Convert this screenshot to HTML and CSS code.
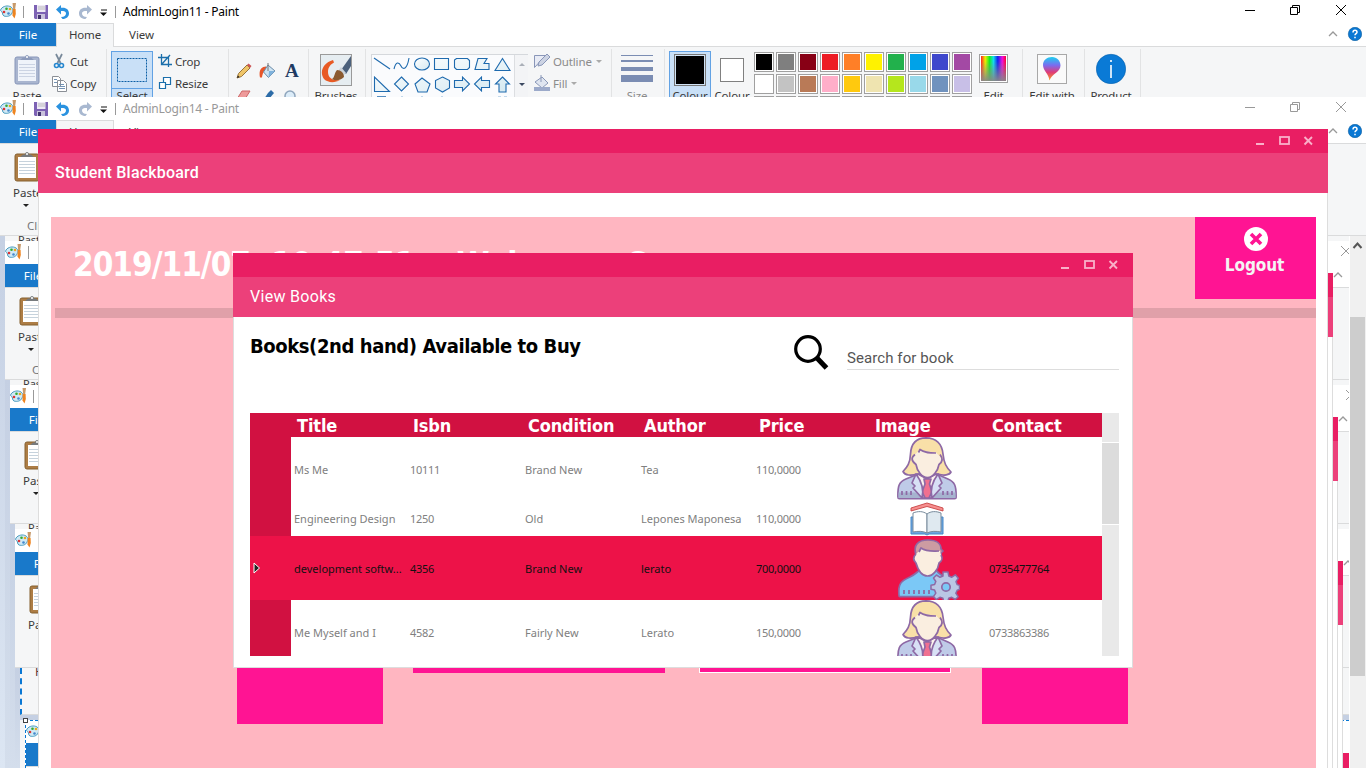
FILE: index.html
```html
<!DOCTYPE html>
<html lang="en">
<head>
<meta charset="utf-8">
<title>Student Blackboard</title>
<link rel="stylesheet" href="styles.css">
</head>
<body>
<svg class="defs" width="0" height="0">
  <linearGradient id="hue" x1="0" x2="1" y1="0" y2="0"><stop offset="0" stop-color="#f22"/><stop offset=".17" stop-color="#ee0"/><stop offset=".34" stop-color="#1e2"/><stop offset=".5" stop-color="#1de"/><stop offset=".67" stop-color="#12e"/><stop offset=".85" stop-color="#e1d"/><stop offset="1" stop-color="#f03"/></linearGradient>
  <linearGradient id="fadegray" x1="0" x2="0" y1="0" y2="1"><stop offset=".2" stop-color="#888" stop-opacity="0"/><stop offset="1" stop-color="#888" stop-opacity=".95"/></linearGradient>
  <linearGradient id="drop" x1="0" x2="0" y1="0" y2="1"><stop offset="0" stop-color="#1bd0f0"/><stop offset=".35" stop-color="#7a6cf0"/><stop offset=".65" stop-color="#e03c78"/><stop offset="1" stop-color="#f5a020"/></linearGradient>
  <linearGradient id="ice" x1="0" x2="1" y1="0" y2="1"><stop offset="0" stop-color="#fff"/><stop offset="1" stop-color="#d5e9f1"/></linearGradient>
  <symbol id="paint" viewBox="0 0 17 16"><path d="M1 6C3 3 8 2 11 4c3 2 2 4 1 6-1 3-5 4-8 3-2-1-1-3-2-4S0 8 1 6z" fill="#cfe9f5" stroke="#4a9cc0"/><circle cx="4" cy="9" r="1.300" fill="#d33"/><circle cx="6.500" cy="5.800" r="1.300" fill="#3a3"/><circle cx="10" cy="6" r="1.300" fill="#e8a820"/><circle cx="8.500" cy="10.500" r="1.300" fill="#48c"/><path d="M12.500 0h3.500l-.8 6h-2z" fill="#c79a6b"/><path d="M12.700 6h2.900l.2 5-1.300 4.500-2-3z" fill="#ee8420"/></symbol>
  <symbol id="save" viewBox="0 0 14 14"><path d="M0 0h14v14H1l-1-1z" fill="#7d62b4"/><path d="M3 0h8.500v7H3z" fill="#eee9f6"/><path d="M4 2h7M4 4h7" stroke="#bbb"/><path d="M3 9h8v5H3z" fill="#c9c2dc"/><path d="M4 10h3v4H4z" fill="#443571"/></symbol>
  <symbol id="undo" viewBox="0 0 14 14"><path d="M0 4.500L5 0v2.800c5-.8 8 1.700 8 5.700 0 3-2.500 5.500-6.500 5.500l-1.500-2c3.500 0 5-1.800 5-3.600C10 6.500 8.500 6 5 6v3.500z"/></symbol>
  <symbol id="more" viewBox="0 0 8 8"><path d="M1 1h6" stroke="#111"/><path d="M0 3.500h7L3.500 7z" fill="#111"/></symbol>
  <symbol id="ctl" viewBox="0 0 104 12"><path d="M0 6.500h10M45.500 3.500h7v7h-7zM47.500 3v-1.500h7v7h-2M91 1l10 10M101 1L91 11" fill="none" stroke="currentColor"/></symbol>
  <symbol id="help" viewBox="0 0 34 14"><path d="M1 9l4-4 4 4" fill="none" stroke="#999" stroke-width="1.300"/><circle cx="27" cy="7" r="6.700" fill="#0a78d4" stroke="#075a9c" stroke-width=".6"/><path d="M25 5.500c0-3 4-2.700 4-.3 0 1.300-2 1.500-2 3M27 9.800v1.500" fill="none" stroke="#fff" stroke-width="1.500"/></symbol>
  <symbol id="clip" viewBox="0 0 26 31"><rect x="1" y="3" width="24" height="27" rx="2" fill="#ad7d45" stroke="#85602f"/><path d="M4 6h18v21H4z" fill="#fff"/><path d="M5 10.500h16M5 13.500h16M5 16.500h16M5 19.500h16M5 22.500h16" stroke="#c6d2dc"/><path d="M6 6l3-2.500h2C11 0 15 0 15 3.500h2L20 6z" fill="#777b7e"/><circle cx="13" cy="3" r="1" fill="#fff"/></symbol>
  <symbol id="clipoff" viewBox="0 0 26 31"><rect x="1" y="3" width="24" height="27" rx="2" fill="#a9b5cf" stroke="#8796b9"/><path d="M4 6h18v21H4z" fill="#eff3fa"/><path d="M5 10.500h16M5 13.500h16M5 16.500h16M5 19.500h16M5 22.500h16" stroke="#cbd3e3"/><path d="M6 6l3-2.500h2C11 0 15 0 15 3.500h2L20 6z" fill="#8d9bbb"/><circle cx="13" cy="3" r="1" fill="#fff"/></symbol>
  <symbol id="pctl" viewBox="0 0 58 10"><path d="M0 8h8" stroke="#f9b0c9" stroke-width="2"/><rect x="24" y="1" width="9" height="7" fill="none" stroke="#f9b0c9" stroke-width="1.800"/><path d="M48.500 1l7.500 7.500M56 1l-7.500 7.500" stroke="#f9b0c9" stroke-width="1.900" fill="none"/></symbol>
  <symbol id="woman" viewBox="0 0 60 64">
    <g stroke="#8e69a5" stroke-width="1.700" stroke-linejoin="round">
    <path d="M29 .9C18 1 14 8 13.500 17c-.4 9-3 13-7.500 17.500 2 4 8 4.500 14 2.500h21c6 2 11.500 1 13-2-5-5-7-9-8-18C45 7 39 1 29 .9z" fill="#f9e0a8"/>
    <path d="M.9 58c0-9 1-13 8-16l10-4h23l9 4c7 3 8.200 7 8.200 16v2.500q0 1.200-1.500 1.200H2.400Q.9 61.700.9 60z" fill="#bfcbe8"/>
    <path d="M1.500 55.500h57v5.500h-57z" fill="#a6b3cf" stroke="none"/>
    <path d="M21 37l9 5 9-5 4 8-9 16H26L16 45z" fill="#fdf3ee"/>
    <path d="M27 42h7l-1.500 5 2.500 8-3 6h-4l-3-6 3-8z" fill="#f07090"/>
    <path d="M19 37l-4 9 3 3-2 2 9 10c2-8 0-16-6-24zM41 37l4 9-3 3 2 2-9 10c-2-8 0-16 6-24z" fill="#d8e0f5"/>
    <path d="M18 17.500l4-4 17 2 3 3c4 4 3 7 0 9-1 6-6 13-11.500 13S20 34 19 27.500c-5-4-4-7-1-10z" fill="#faeee0" stroke="none"/>
    <path d="M18 17.500c-4 3-4 6 1 10 1 6.500 6 13 11.500 13s10.500-7 11.500-13c4-3 4-6 1-10M21.500 15.500l1.500-3c5 3.500 10 3.500 16 3.500" fill="none"/></g>
    <path d="M5 54v4M9.500 54v4M14 54v4M46 54v4M50.500 54v4M55 54v4" stroke="#8e69a5" stroke-width="1.700"/>
  </symbol>
</svg>

<main class="desktop">
  <div class="workspace"></div>

  <!-- nested captures, each one step down and right -->
  <section class="snap s1">
    <div class="cut">Paste</div>
    <div class="ntitle"><svg width="17" height="16"><use href="#paint"/></svg><i></i><svg class="nctl" width="104" height="12"><use href="#ctl"/></svg></div>
    <div class="ntabs"><b>File</b><svg width="34" height="14"><use href="#help"/></svg></div>
    <div class="nribbon"><svg width="26" height="31"><use href="#clip"/></svg><span>Paste</span><em></em><u>Clipboard</u></div>
    <div class="ncanvas"></div>
  </section>
  <section class="snap s2">
    <div class="cut">Paste</div>
    <div class="ntitle"><svg width="17" height="16"><use href="#paint"/></svg><i></i><svg class="nctl" width="104" height="12"><use href="#ctl"/></svg></div>
    <div class="ntabs"><b>File</b><svg width="34" height="14"><use href="#help"/></svg></div>
    <div class="nribbon"><svg width="26" height="31"><use href="#clip"/></svg><span>Paste</span><em></em></div>
    <div class="ncanvas"></div>
  </section>
  <section class="snap s3">
    <div class="cut">Paste</div>
    <div class="ntitle"><svg width="17" height="16"><use href="#paint"/></svg></div>
    <div class="ntabs"><b>File</b><svg width="34" height="14"><use href="#help"/></svg></div>
    <div class="nribbon"><svg width="26" height="31"><use href="#clip"/></svg><span>Paste</span></div>
    <div class="ncanvas"></div>
  </section>
  <section class="snap s4">
    <div class="lastribbon">Paste</div>
    <div class="lastgap"></div>
    <div class="lastwin">
      <div class="ntitle"><svg width="17" height="16"><use href="#paint"/></svg></div>
      <div class="ntabs"><b></b></div>
    </div>
    <span class="handle"></span>
  </section>
  <div class="edge e4"></div><div class="edge e3"></div><div class="edge e2"></div><div class="edge e1"></div>

  <div class="vscroll"><svg width="16" height="81"><path d="M3.500 12l4-4.500 4 4.500" fill="none" stroke="#555" stroke-width="2"/></svg><span></span></div>

  <!-- background Paint window -->
  <section class="paint back">
    <header class="title"><svg width="17" height="16"><use href="#paint"/></svg><i></i><svg class="sv" width="14" height="14"><use href="#save"/></svg><svg class="un" width="14" height="14"><use href="#undo"/></svg><svg class="re" width="14" height="14"><use href="#undo"/></svg><svg class="mo" width="8" height="8"><use href="#more"/></svg><i class="i2"></i><span>AdminLogin14 - Paint</span><svg class="ctl" width="104" height="12"><use href="#ctl"/></svg></header>
    <nav class="tabs"><b>File</b><span class="home">Home</span><span class="view">View</span><svg width="34" height="14"><use href="#help"/></svg></nav>
    <div class="nribbon main"><svg width="26" height="31"><use href="#clip"/></svg><span>Paste</span><em></em><u>Clipboard</u></div>
  </section>

  <!-- front Paint window -->
  <section class="paint front">
    <header class="title"><svg width="17" height="16"><use href="#paint"/></svg><i></i><svg class="sv" width="14" height="14"><use href="#save"/></svg><svg class="un" width="14" height="14"><use href="#undo"/></svg><svg class="re" width="14" height="14"><use href="#undo"/></svg><svg class="mo" width="8" height="8"><use href="#more"/></svg><i class="i2"></i><span>AdminLogin11 - Paint</span><svg class="ctl" width="104" height="12"><use href="#ctl"/></svg></header>
    <nav class="tabs"><b>File</b><span class="home">Home</span><span class="view">View</span><svg width="34" height="14"><use href="#help"/></svg></nav>
    <div class="ribbon">
      <div class="grp g1">
        <div class="big paste"><svg width="26" height="31"><use href="#clipoff"/></svg><span>Paste</span></div>
        <div class="stack">
          <div><svg width="17" height="16" viewBox="0 0 17 16"><path d="M5 1l4.500 9M11 1L6.500 10" stroke="#78899a" stroke-width="1.700"/><circle cx="5.500" cy="12.500" r="2" fill="none" stroke="#2687cf" stroke-width="1.600"/><circle cx="10.500" cy="12.500" r="2" fill="none" stroke="#2687cf" stroke-width="1.600"/></svg><span>Cut</span></div>
          <div><svg width="17" height="17" viewBox="0 0 17 17"><path d="M1.500 1.500h6l2 2v8h-8zM6.500 5.500h6l3 3v8h-9z" fill="#fff" stroke="#8a8f96"/><path d="M3 4.500h3M3 7.500h3M8 9.500h5M8 11.500h6M8 13.500h6" stroke="#7393b5"/></svg><span>Copy</span></div>
        </div>
      </div>
      <div class="grp g2">
        <div class="select"><svg width="40" height="36"><rect x="5.500" y="6.500" width="29" height="23" fill="none" stroke="#0b5fa5" stroke-dasharray="2 1"/></svg><span>Select</span></div>
        <div class="stack">
          <div><svg width="16" height="14" viewBox="0 0 16 14"><path d="M3.500 0v10.500H14M0 3.500h10.500V13M4 10L12 1" fill="none" stroke="#1b6fab" stroke-width="1.300"/></svg><span>Crop</span></div>
          <div><svg width="16" height="14" viewBox="0 0 16 14"><path d="M5.500 1.500h7v7h-7z" fill="#fff" stroke="#1b6fab" stroke-width="1.200"/><path d="M1.500 6.500h6v6h-6z" fill="#fff" stroke="#1b6fab" stroke-width="1.200"/></svg><span>Resize</span></div>
        </div>
      </div>
      <div class="grp g3">
        <svg width="16" height="16" viewBox="0 0 16 16"><path d="M1 15l1.500-4.500L11 2l3 3-8.500 8.500z" fill="#efc568" stroke="#98743d"/><path d="M11 2l1.500-1.500L15.500 3 14 5z" fill="#c55"/><path d="M1 15l1-2.500 1.500 1.500z" fill="#222"/></svg>
        <svg width="17" height="16" viewBox="0 0 17 16"><path d="M1 14.500C-.5 8 2 3.500 7 3.500l1 3c-3 .5-4.500 4-5 8z" fill="#e8562a"/><path d="M9 2l7 6-6.500 6.500L4.500 9z" fill="#cfe4f3" stroke="#6a8ba8"/><path d="M10 8l6 0-6.500 6.500z" fill="#7fb2dc"/><path d="M9 8V0" stroke="#777"/></svg>
        <span class="bigA">A</span>
        <svg width="15" height="9" viewBox="0 0 15 9"><path d="M6 1h8l-5 8H1z" fill="#ee9a9a" stroke="#c66"/></svg>
        <svg width="15" height="9" viewBox="0 0 15 9"><path d="M12 0l3 3-5 6H5l4-6z" fill="#2c6ca8"/></svg>
        <svg width="15" height="9" viewBox="0 0 15 9"><circle cx="7" cy="6" r="5" fill="#dcecf8" stroke="#8fa6bd" stroke-width="1.500"/></svg>
      </div>
      <div class="grp g4"><div class="big"><svg width="32" height="32" viewBox="0 0 32 32"><rect x=".5" y=".5" width="31" height="31" fill="#e6edf1" stroke="#9a9a9a"/><path d="M13 6C3 9-1 18 4 25c4 4 11 4 16 1-7 1-12-2-12-8 0-5 3-8 6-9.500z" fill="#e85a24"/><path d="M31 2v10L26 20l-5-4z" fill="#4c617c"/><path d="M21 13l5 6-3 3-5-5z" fill="#ccd3da"/><path d="M17 16c4 0 7 3 7 7-4 4-9 4-12 2 3-2 2-6 5-9z" fill="#8a5a30"/></svg><span>Brushes</span></div></div>
      <div class="grp g5">
        <div class="shapes"><svg width="142" height="43" viewBox="0 0 142 43"><g fill="url(#ice)" stroke="#1e6aae" stroke-width="1.100"><path d="M2 3l16 11"/><path d="M22 14c2-8 5-7 7-3s6 4 8-8" fill="none"/><ellipse cx="50" cy="9" rx="7.500" ry="6"/><path d="M62.500 3.500h14v11h-14zM82.500 5l2-1.500h11l2 2v7l-2 2h-11l-2-2zM106 3.500h9l-3 5h5v6h-14zM130.500 3.500l7.500 12h-15zM2.500 22v14.500h15zM29.500 22l7 7-7 7-7-7zM50 23l8 6-3 8h-9l-3-8zM70.500 22l7 3.500v7.500l-7 4-7-4v-7.500zM82.500 25.500h8V22l7 7-7 7v-3.500h-8zM117.500 25.500h-8V22l-7 7 7 7v-3.500h8zM130.500 22l7 7h-3.500v8h-7v-8h-3.500z"/></g><path d="M5 42h9" stroke="#1e6aae" stroke-width="1.500"/><path d="M29 42h2M49 42h2M69 42h2M126 42h3M132 42h3" stroke="#8ab4d8"/></svg>
          <svg class="arrows" width="14" height="43"><path d="M4 11l3-3 3 3z" fill="#aaafb8"/><path d="M4 28h6l-3 3z" fill="#3b4860"/></svg></div>
        <div class="stack off">
          <div><svg width="18" height="16" viewBox="0 0 18 16"><path d="M1.500 2.500h11l-11 12z" fill="#e8ebf5" stroke="#8996b8"/><path d="M5 13l1-4 8-8 3 3-8 8z" fill="#ccd3e3" stroke="#8996b8"/></svg><span>Outline</span><s></s></div>
          <div><svg width="18" height="16" viewBox="0 0 18 16"><path d="M2 7l7-5 6 6-6 5z" fill="#dfe5f0" stroke="#8a98b8"/><path d="M8 0v7" stroke="#8a98b8"/><path d="M1 12h16v4H1z" fill="#9caaca"/></svg><span>Fill</span><s></s></div>
        </div>
      </div>
      <div class="grp g6"><div class="big"><svg width="32" height="31"><path d="M0 1.500h32" stroke="#7b8db3"/><path d="M0 7h32" stroke="#7b8db3" stroke-width="2"/><path d="M0 15h32" stroke="#7b8db3" stroke-width="4"/><path d="M0 24.500h32" stroke="#7b8db3" stroke-width="7"/></svg><span class="dim">Size</span></div></div>
      <div class="grp g7">
        <div class="col1"><i></i><span>Colour</span></div>
        <div class="col2"><i></i><span>Colour</span></div>
        <div class="pal"><i class="c01"></i><i class="c02"></i><i class="c03"></i><i class="c04"></i><i class="c05"></i><i class="c06"></i><i class="c07"></i><i class="c08"></i><i class="c09"></i><i class="c10"></i><i></i><i class="c12"></i><i class="c13"></i><i class="c14"></i><i class="c15"></i><i class="c16"></i><i class="c17"></i><i class="c18"></i><i class="c19"></i><i class="c20"></i><i></i><i></i><i></i><i></i><i></i><i></i><i></i><i></i><i></i><i></i></div>
        <div class="big edit"><svg width="29" height="30"><rect x=".5" y="1.500" width="28" height="28" fill="#fff" stroke="#a0a0a0"/><path d="M2 3h25v25H2z" fill="url(#hue)"/><path d="M2 3h25v25H2z" fill="url(#fadegray)"/></svg><span>Edit</span></div>
      </div>
      <div class="grp g8"><div class="big"><svg width="30" height="31"><rect x=".5" y="1.500" width="29" height="29" fill="#fafafa" stroke="#a8a8a8"/><path d="M15 4c5 0 8.500 4 8.500 8.500 0 7-9 8-11 15C12 21 6 18 6 12c0-5 4-8 9-8z" fill="url(#drop)"/></svg><span>Edit with</span></div></div>
      <div class="grp g9"><div class="big"><svg width="30" height="31"><circle cx="15" cy="16" r="14.700" fill="#0a7ad6" stroke="#0862ad" stroke-width=".6"/><path d="M15 12v13M15 7v2" stroke="#fff" stroke-width="1.600"/></svg><span>Product</span></div></div>
    </div>
  </section>

  <!-- Student Blackboard window -->
  <section class="win board">
    <div class="bar"><svg width="58" height="10"><use href="#pctl"/></svg></div>
    <h1>Student Blackboard</h1>
    <div class="pane">
      <div class="top"><p class="clock">2019/11/0<span>7 10:47:51 &nbsp;Welcome C</span></p>
        <div class="logout"><svg width="26" height="26"><circle cx="13" cy="13" r="12" fill="#fff"/><path d="M8 8l10 10M18 8L8 18" stroke="#ff1493" stroke-width="3.600"/></svg><span>Logout</span></div></div>
      <div class="rule"></div>
      <div class="tiles"><i class="t1"></i><i class="t2"></i><i class="t3"></i><i class="t4"></i></div>
    </div>
  </section>

  <!-- View Books window -->
  <section class="win books">
    <div class="bar"><svg width="58" height="10"><use href="#pctl"/></svg></div>
    <h1>View Books</h1>
    <div class="content">
      <div class="head">
        <h2>Books(2nd hand) Available to Buy</h2>
        <svg width="36" height="37" viewBox="0 0 36 37"><circle cx="14" cy="15" r="12.300" fill="none" stroke="#000" stroke-width="3.200"/><path d="M22.500 23.500L32.500 34" stroke="#000" stroke-width="5"/></svg>
        <div class="search">Search for book</div>
      </div>
      <div class="tablewrap">
        <div class="table">
          <div class="row hd"><i></i><span>Title</span><span>Isbn</span><span>Condition</span><span>Author</span><span>Price</span><span>Image</span><span>Contact</span></div>
          <div class="row r1"><i></i><span>Ms Me</span><span class="num">10111</span><span>Brand New</span><span>Tea</span><span class="num">110,0000</span><span class="img"><svg width="60" height="64"><use href="#woman"/></svg></span><span></span></div>
          <div class="row r2"><i></i><span>Engineering Design</span><span class="num">1250</span><span>Old</span><span>Lepones Maponesa</span><span class="num">110,0000</span><span class="img"><svg width="34" height="35" viewBox="0 0 34 35"><path d="M1 6l16-5 16 5v3L17 4.500 1 9z" fill="#f78f8f" stroke="#c74343" stroke-width=".9"/><path d="M1 15h32v17H19l-2 1-2-1H1z" fill="#6ea6e0" stroke="#4788c7"/><path d="M3 11c5-2 10-2 14 1v19c-4-2-9-2-14-1z" fill="#fff" stroke="#788b9c"/><path d="M31 11c-5-2-10-2-14 1v19c4-2 9-2 14-1z" fill="#dfe9f0" stroke="#788b9c"/></svg></span><span></span></div>
          <div class="row sel"><i><svg width="8" height="12"><path d="M1 1l5.500 5L1 11z" fill="#222" stroke="#fff"/></svg></i><span>development softw...</span><span class="num">4356</span><span>Brand New</span><span>lerato</span><span class="num">700,0000</span><span class="img"><svg width="64" height="64" viewBox="0 0 64 64"><g stroke="#8e69a5" stroke-width="1.700" stroke-linejoin="round"><path d="M2.900 59c-1-11 2-14 11-18 6-3 7-5 9-6h18c3 5 12 7 15 11l1 14.700H4q-1.100 0-1.100-1.700z" fill="#7bc8f6"/><path d="M20 19c-3-10 2-15 12-15 9 0 13 4 13 9l2 2-2 2v4z" fill="#cc9ba2"/><path d="M22 16l4-4c6 4 11 3 18 3l1 4c2 4 1 6-2 8-1 7-6 13-11.500 13S22 34 20 27c-4-4-2-7 2-11z" fill="#faeee0" stroke="none"/><path d="M20 18c-3 3-3 6 0 9 2 7 6 13 11.500 13S42 34 43 27c3-2 4-5 2-8M23 16l2-4c6 4 11 3 18 3" fill="none"/><path d="M47 36h5l.8 4 3 1.200 3.500-2.400 3 3.400-2.300 3.400 1.200 3 2.300.8v4l-2.300.8-1.400 3 2.300 3.500-2.900 2.800-3.500-2.200-3 1-.9 3.500h-4l-.9-3.500-3-1-3.600 2.200-2.800-2.900 2.300-3.500-1.200-3-3.600-.8v-4l3.600-.8 1.200-3-2.300-3.500 3-3 3.500 2.300 3-1.200z" fill="#bac7e5" stroke-width="1.500"/><circle cx="50" cy="51" r="4.200" fill="#7bc8f6"/></g><path d="M8 54v4M13 54v4M18 54v4M23 54v4M28 54v4M33 54v4" stroke="#8e69a5" stroke-width="1.800"/></svg></span><span class="num">0735477764</span></div>
          <div class="row r1"><i></i><span>Me Myself and I</span><span class="num">4582</span><span>Fairly New</span><span>Lerato</span><span class="num">150,0000</span><span class="img"><svg width="60" height="64"><use href="#woman"/></svg></span><span class="num">0733863386</span></div>
        </div>
        <div class="tscroll"><i></i><b></b><i class="rest"></i></div>
      </div>
    </div>
  </section>
</main>
</body>
</html>
```

FILE: styles.css
```css
* { box-sizing: border-box; }
body { margin: 0; font: 12px "Noto Sans", "Open Sans", sans-serif; }
svg { display: block; flex: none; }
.defs { position: absolute; }
i, em { font-style: normal; }
b { font-weight: 400; }
u, s { text-decoration: none; }
.desktop { position: relative; width: 1366px; height: 768px; overflow: hidden; background: #f5f6f7; }
.workspace { position: absolute; top: 236px; left: 0; right: 0; bottom: 0; background: linear-gradient(#c5d0e3, #dce6f3); }

/* nested captures */
.snap { position: absolute; display: flex; flex-direction: column; overflow: hidden; background: #f5f6f7; color: #3b3b3b; }
.s1 { left: 5px; top: 236px; width: 1344px; height: 532px; }
.s2 { left: 10px; top: 380px; width: 1339px; height: 388px; }
.s3 { left: 15px; top: 524px; width: 1334px; height: 244px; }
.s4 { left: 20px; top: 668px; width: 1329px; height: 100px; }
.cut { height: 5px; flex: none; padding-left: 13px; overflow: hidden; line-height: 8px; font-size: 11px; }
.ntitle { height: 23px; flex: none; display: flex; align-items: center; background: #fff; color: #999; }
.ntitle > svg:first-child { margin-top: -2px; }
.ntitle i { width: 1px; height: 13px; margin-left: 6px; background: #999; }
.nctl { margin-left: auto; margin-top: -3px; }
.s1 .nctl { margin-right: -5px; }
.s2 .nctl { margin-right: -10px; }
.ntabs { height: 24px; flex: none; display: flex; background: #fff; border-bottom: 1px solid #dadbdc; }
.ntabs b { width: 56px; height: 23px; background: #1979ca; color: #fff; text-align: center; line-height: 23px; font-size: 11.500px; }
.ntabs svg { margin: 4px -19px 0 auto; }
.s1 .ntabs svg { margin-right: -18px; }
.s2 .ntabs svg { margin-right: -23px; }
.s3 .ntabs svg { margin-right: -28px; }
.nribbon { height: 92px; flex: none; padding: 7px 0 0 14px; border-bottom: 1px solid #dadbdc; background: #f5f6f7; overflow: hidden; }
.nribbon span { display: block; margin: 3px 0 0 -1px; line-height: 16px; font-size: 11.500px; }
.nribbon em { display: block; width: 0; margin: 3px 0 0 9px; border: 3px solid transparent; border-top-color: #222; border-bottom: 0; }
.nribbon u { display: block; margin: 11px 0 0 13px; line-height: 16px; font-size: 11.500px; color: #777; }
.ncanvas { flex: 1; background: linear-gradient(#c5d0e3, #d4deec); }
.lastribbon { height: 47px; flex: none; padding-left: 13px; line-height: 8px; border-left: 2px dashed #0a78d4; border-bottom: 1px solid #dadbdc; color: #603838; }
.lastgap { height: 5px; flex: none; background: #c5d0e3; }
.lastwin { flex: 1; margin-left: 5px; border-top: 1px dashed #0a78d4; border-left: 1px dashed #0a78d4; background: #fff; }
.lastwin .ntitle { height: 22px; }
.handle { position: absolute; left: 3px; top: 50px; width: 5px; height: 5px; border: 1px solid #444; background: #fff; }
.edge { position: absolute; width: 20px; bottom: 0; border-right: 1px solid #ddd; background: #fff; }
.edge::before { content: ""; position: absolute; left: 0; top: 0; width: 20px; height: 64px; background: linear-gradient(#e91e63 24px, #ec407a 24px); }
.e1 { left: 1313px; top: 273px; }
.e2 { left: 1318px; top: 417px; }
.e3 { left: 1323px; top: 561px; }
.e4 { left: 1329px; top: 753px; }
.vscroll { position: absolute; left: 1349px; top: 236px; width: 17px; height: 532px; background: #f0f0f0; border-left: 1px solid #fff; }
.vscroll span { display: block; width: 15px; height: 359px; background: #cdcdcd; }

/* Paint windows */
.paint { position: absolute; left: 0; width: 1366px; background: #fff; overflow: hidden; color: #3b3b3b; }
.front { top: 0; height: 97px; }
.back { top: 97px; height: 139px; }
.title { height: 23px; display: flex; align-items: center; color: #999; }
.front .title { color: #000; }
.title > svg:first-child { margin-top: -2px; }
.title > i { width: 1px; height: 12px; margin-left: 6px; background: #999; }
.title .sv { margin-left: 10px; }
.title .un { margin-left: 8px; fill: #2a92e0; }
.title .re { margin-left: 8px; fill: #a8b8d0; transform: scaleX(-1); }
.title .mo { margin-left: 8px; margin-top: 2px; }
.title .i2 { margin-left: 7px; }
.title span { margin-left: 7px; font-size: 12px; letter-spacing: -.25px; }
.title .ctl { margin-left: auto; margin-right: 17px; margin-top: -3px; }
.tabs { height: 24px; display: flex; border-bottom: 1px solid #dadbdc; line-height: 23px; font-size: 11.500px; }
.tabs b { width: 56px; background: #1979ca; color: #fff; text-align: center; }
.tabs .home { width: 58px; height: 24px; text-align: center; background: #f5f6f7; border: 1px solid #dadbdc; border-bottom: 0; line-height: 21px; letter-spacing: -.2px; }
.tabs .view { margin-left: 15px; }
.tabs svg { margin: 4px 4px 0 auto; }
.ribbon { display: flex; height: 50px; background: #f5f6f7; font-size: 11.500px; letter-spacing: -.15px; }
.grp { display: flex; position: relative; height: 48px; flex: none; padding-top: 5px; border-right: 1px solid #e2e3e4; margin-top: 2px; }
.big { display: flex; flex-direction: column; align-items: center; white-space: nowrap; height: 49px; }
.big span { margin-top: auto; }
.big svg { margin-top: -1px; }
.g4 .big svg, .g1 .big svg, .g6 .big svg { margin-top: 0; }
.big span, .select span, .col1 span, .col2 span { line-height: 14px; }
.stack { display: flex; flex-direction: column; gap: 6px; margin-top: -1px; }
.stack > div { display: flex; height: 16px; flex: none; align-items: center; white-space: nowrap; }
.g1 { width: 107px; }
.paste { width: 26px; margin-left: 14px; }
.g1 .stack { margin-left: 11px; }
.g1 .stack span { margin-left: 2px; }
.g2 { width: 122px; }
.select { width: 42px; height: 60px; margin: -3px 0 0 4px; border: 1px solid #62a2e4; background: #c9e0f7; display: flex; flex-direction: column; align-items: center; }
.select svg { border-bottom: 1px solid #62a2e4; height: 37px; }
.select span { margin-top: 0; }
.g2 .stack { margin-left: 5px; }
.g2 .stack span { margin-left: 1px; }
.g3 { width: 80px; display: grid; grid-template-columns: 23px 24px 23px; grid-auto-rows: 27px; padding: 14px 0 0 7px; }
.bigA { font: bold 19px/16px "Liberation Serif", serif; color: #1f3b63; padding-left: 2px; }
.g4 { width: 57px; padding-right: 2px; justify-content: center; }
.g5 { width: 246px; padding-left: 5px; }
.shapes { display: flex; width: 157px; height: 60px; border: 1px solid #d5d8dc; background: #fafbfd; }
.arrows { border-left: 1px solid #dcdee1; background: #f3f4f6; height: 60px; }
.g5 .stack { margin-left: 5px; }
.g5 .stack span { margin-left: 2px; }
.off { color: #8b8b8b; }
.off s { border: 3px solid transparent; border-top-color: #aaa; border-bottom: 0; margin-left: 4px; }
.g6 { width: 53px; padding-right: 2px; justify-content: center; }
.dim { color: #8b8b8b; }
.g7 { width: 358px; padding-left: 4px; }
.col1, .col2 { display: flex; flex-direction: column; align-items: center; }
.col1 { width: 42px; height: 60px; margin-top: -3px; border: 1px solid #62a2e4; background: #c9e0f7; padding-top: 2px; }
.col1 i { flex: none; width: 32px; height: 32px; border: 1px solid #777; background: #000; box-shadow: inset 0 0 0 1px #cfe2f5; }
.col1 span { margin-top: 3px; }
.col2 { width: 36px; height: 60px; margin-left: 3px; padding-top: 4px; }
.col2 i { flex: none; width: 24px; height: 24px; border: 1px solid #808080; background: #fff; }
.col2 span { margin-top: 7px; }
.pal { display: grid; grid-template-columns: repeat(10, 20px); grid-auto-rows: 20px; gap: 2px; margin: -2px 0 0 4px; }
.pal i { border: 1px solid #a0a0a0; box-shadow: inset 0 0 0 1px #fff; background: #fff; }
.pal .c01 { background: #000; } .pal .c02 { background: #7f7f7f; } .pal .c03 { background: #880015; } .pal .c04 { background: #ed1c24; } .pal .c05 { background: #ff7f27; }
.pal .c06 { background: #fff200; } .pal .c07 { background: #22b14c; } .pal .c08 { background: #00a2e8; } .pal .c09 { background: #3f48cc; } .pal .c10 { background: #a349a4; }
.pal .c12 { background: #c3c3c3; } .pal .c13 { background: #b97a57; } .pal .c14 { background: #ffaec9; } .pal .c15 { background: #ffc90e; } .pal .c16 { background: #efe4b0; }
.pal .c17 { background: #b5e61d; } .pal .c18 { background: #99d9ea; } .pal .c19 { background: #7092be; } .pal .c20 { background: #c8bfe7; }
.edit { margin-left: 7px; }
.g8 { width: 62px; padding-right: 3px; justify-content: center; }
.g9 { width: 56px; padding-right: 3px; justify-content: center; }

/* pink windows */
.win { position: absolute; background: #fff; border: 1px solid #ddd; border-top: 0; }
.bar { height: 24px; margin: 0 -1px; padding: 7px 14px 0 0; background: #e91e63; }
.bar svg { margin-left: auto; }
.win h1 { height: 40px; margin: 0 -1px; padding-left: 17px; background: #ec407a; color: #fff; font: 500 16px/39px Roboto, sans-serif; letter-spacing: .2px; }
.win.books h1 { font-weight: 400; letter-spacing: .3px; }
.board { left: 38px; top: 129px; width: 1290px; height: 660px; }
.pane { margin: 24px 11px 0 12px; height: 560px; background: #ffb6c1; }
.top { height: 91px; display: flex; justify-content: space-between; overflow: hidden; }
.clock { margin: 25px 0 0 22px; color: #fff; font: bold 33px/46px "DejaVu Sans Condensed", "DejaVu Sans", sans-serif; font-stretch: condensed; letter-spacing: -1px; white-space: nowrap; }
.clock span { letter-spacing: -.5px; word-spacing: 11px; }
.logout { width: 121px; height: 82px; background: #ff1493; padding-top: 9px; display: flex; flex-direction: column; align-items: center; color: #f4f4f4; font: bold 17px/26px "DejaVu Sans Condensed", "DejaVu Sans", sans-serif; font-stretch: condensed; letter-spacing: -.1px; }
.logout span { padding-right: 2px; }
.rule { height: 10px; margin-left: 4px; background: #e0a0a9; }
.tiles { display: flex; align-items: flex-start; padding-left: 186px; }
.tiles i { background: #ff1493; }
.t1, .t4 { width: 146px; height: 406px; }
.t2 { width: 252px; height: 355px; margin-left: 30px; }
.t3 { width: 252px; height: 355px; margin-left: 34px; border: 1px solid #fff; border-top: 0; }
.t4 { margin-left: 31px; }
.books { left: 233px; top: 253px; width: 900px; height: 415px; }
.content { padding: 0 13px 0 16px; }
.head { display: flex; height: 96px; }
.head h2 { width: 544px; margin: 16px 0 0; font: bold 20px/26px "DejaVu Sans Condensed", "DejaVu Sans", sans-serif; font-stretch: condensed; letter-spacing: -.4px; white-space: nowrap; }
.head svg { margin-top: 17px; }
.search { width: 272px; height: 53px; margin-left: 17px; padding-top: 31px; border-bottom: 1px solid #ddd; color: #555; font: 15px/21px Roboto, sans-serif; letter-spacing: .08px; }
.tablewrap { display: flex; height: 243px; overflow: hidden; }
.table { width: 852px; }
.row { display: grid; grid-template-columns: 41px 116px 115px 116px 115px 116px 117px 116px; align-items: center; color: #808080; font-size: 11px; }
.row > i { background: #d11141; align-self: stretch; display: flex; align-items: center; padding-left: 3px; }
.row span { padding-left: 3px; white-space: nowrap; }
.row .num { letter-spacing: -.28px; }
.row .img { display: flex; justify-content: center; padding: 0; align-self: stretch; align-items: center; }
.row.r2 .img { padding-right: 1px; }
.row.r1 .img { padding-right: 1px; }
.hd { height: 24px; background: #d11141; color: #fff; font: bold 18px/24px "DejaVu Sans Condensed", "DejaVu Sans", sans-serif; font-stretch: condensed; letter-spacing: -.15px; }
.hd span { padding: 1px 0 0 6px; }
.r1 { height: 64px; }
.r2 { height: 35px; }
.r2 > span { margin-top: -1px; }
.r2 > .img { margin-top: 1px; margin-bottom: -1px; }
.sel { height: 64px; background: #ed1248; color: #111; }
.sel > i { background: none; }
.tscroll { width: 17px; display: flex; flex-direction: column; gap: 1px; }
.tscroll i { height: 29px; background: #e9e9e9; }
.tscroll b { height: 81px; background: #dcdcdc; }
.tscroll .rest { flex: 1; }
```
